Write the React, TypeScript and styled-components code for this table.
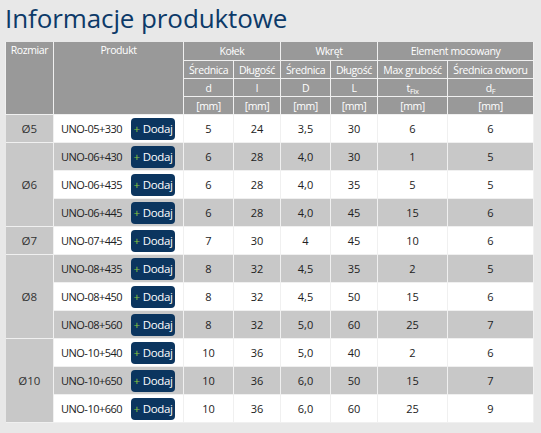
import React from "react";
import styled, {createGlobalStyle} from "styled-components";

interface Item {
  code: string;
  d: string;
  l: string;
  D: string;
  L: string;
  tfix: string;
  dF: string;
}

interface Group {
  size: string;
  items: Item[];
}

const groups: Group[] = [
  {size: "Ø5", items: [{code: "UNO-05+330", d: "5", l: "24", D: "3,5", L: "30", tfix: "6", dF: "6"}]},
  {
    size: "Ø6",
    items: [
      {code: "UNO-06+430", d: "6", l: "28", D: "4,0", L: "30", tfix: "1", dF: "5"},
      {code: "UNO-06+435", d: "6", l: "28", D: "4,0", L: "35", tfix: "5", dF: "5"},
      {code: "UNO-06+445", d: "6", l: "28", D: "4,0", L: "45", tfix: "15", dF: "6"},
    ],
  },
  {size: "Ø7", items: [{code: "UNO-07+445", d: "7", l: "30", D: "4", L: "45", tfix: "10", dF: "6"}]},
  {
    size: "Ø8",
    items: [
      {code: "UNO-08+435", d: "8", l: "32", D: "4,5", L: "35", tfix: "2", dF: "5"},
      {code: "UNO-08+450", d: "8", l: "32", D: "4,5", L: "50", tfix: "15", dF: "6"},
      {code: "UNO-08+560", d: "8", l: "32", D: "5,0", L: "60", tfix: "25", dF: "7"},
    ],
  },
  {
    size: "Ø10",
    items: [
      {code: "UNO-10+540", d: "10", l: "36", D: "5,0", L: "40", tfix: "2", dF: "6"},
      {code: "UNO-10+650", d: "10", l: "36", D: "6,0", L: "50", tfix: "15", dF: "7"},
      {code: "UNO-10+660", d: "10", l: "36", D: "6,0", L: "60", tfix: "25", dF: "9"},
    ],
  },
];

const colWidths = [48, 130, 50, 47, 50, 47, 70, 86];

export default function App() {
  let index = 0;

  return (
    <>
      <GlobalStyle/>
      <Page>
        <Title>Informacje produktowe</Title>
        <Table>
          <colgroup>
            {colWidths.map((w, i) => <col key={i} style={{width: w}}/>)}
          </colgroup>
          <thead>
            <tr>
              <Th rowSpan={4} valign="top">Rozmiar</Th>
              <Th rowSpan={4} valign="top">Produkt</Th>
              <Th colSpan={2} $tall>Kołek</Th>
              <Th colSpan={2} $tall>Wkręt</Th>
              <Th colSpan={2} $tall>Element mocowany</Th>
            </tr>
            <tr>
              <Th>Średnica</Th>
              <Th>Długość</Th>
              <Th>Średnica</Th>
              <Th>Długość</Th>
              <Th>Max grubość</Th>
              <Th>Średnica otworu</Th>
            </tr>
            <tr>
              <Th>d</Th>
              <Th>l</Th>
              <Th>D</Th>
              <Th>L</Th>
              <Th>t<Sub>Fix</Sub></Th>
              <Th>d<Sub>F</Sub></Th>
            </tr>
            <tr>
              {Array.from({length: 6}).map((_, i) => <Th key={i}>[mm]</Th>)}
            </tr>
          </thead>
          <tbody>
            {groups.map((group) =>
              group.items.map((item, i) => {
                const shaded = index++ % 2 === 1;
                return (
                  <tr key={item.code}>
                    {i === 0 && <SizeCell rowSpan={group.items.length}>{group.size}</SizeCell>}
                    <Td shaded={shaded}>
                      <Product>
                        <span>{item.code}</span>
                        <AddButton><Plus>+</Plus>Dodaj</AddButton>
                      </Product>
                    </Td>
                    <Td shaded={shaded}>{item.d}</Td>
                    <Td shaded={shaded}>{item.l}</Td>
                    <Td shaded={shaded}>{item.D}</Td>
                    <Td shaded={shaded}>{item.L}</Td>
                    <Td shaded={shaded}>{item.tfix}</Td>
                    <Td shaded={shaded}>{item.dF}</Td>
                  </tr>
                );
              })
            )}
          </tbody>
        </Table>
      </Page>
    </>
  );
}

const GlobalStyle = createGlobalStyle`
  html, body {
    margin: 0;
    padding: 0;
    background: #e8e8e8;
  }

  body {
    font-family: "Open Sans", "Noto Sans", sans-serif;
  }
`;

const Page = styled.div`
  width: 541px;
  height: 433px;
  padding: 0 5px;
  box-sizing: border-box;
  background: #e8e8e8;
  overflow: hidden;
`;

const Title = styled.h1`
  margin: 0;
  padding-top: 1px;
  height: 41px;
  font-size: 26px;
  font-weight: 400;
  line-height: 34px;
  color: #0d3a68;
  letter-spacing: -0.1px;
`;

const Table = styled.table`
  width: 528px;
  table-layout: fixed;
  border-collapse: collapse;
  font-size: 10.5px;
`;

const Th = styled.th<{$tall?: boolean}>`
  height: ${({$tall}) => $tall ? "18px" : "17px"};
  padding: 0;
  border: 1px solid #f0f0f0;
  border-top: none;
  background: #999999;
  color: #ffffff;
  font-weight: 400;
  line-height: 16px;
  letter-spacing: -0.4px;
  text-align: center;
  white-space: nowrap;
`;

const Sub = styled.sub`
  font-size: 7.5px;
  vertical-align: -2px;
  line-height: 0;
`;

const Td = styled.td<{shaded: boolean}>`
  height: 27px;
  padding: 0;
  border: 1px solid #f0f0f0;
  background: ${({shaded}) => shaded ? "#c8c8c8" : "#ffffff"};
  color: #222222;
  font-size: 11px;
  text-align: center;
  white-space: nowrap;
`;

const SizeCell = styled.td`
  padding: 0;
  border: 1px solid #f0f0f0;
  border-left: none;
  background: #c8c8c8;
  color: #333333;
  font-size: 11.5px;
  text-align: center;
`;

const Product = styled.div`
  display: flex;
  align-items: center;
  justify-content: space-between;
  padding: 0 8px 0 7px;
  font-size: 11px;
  letter-spacing: -0.5px;
`;

const AddButton = styled.span`
  display: inline-flex;
  align-items: center;
  justify-content: center;
  height: 22px;
  width: 44px;
  box-sizing: border-box;
  border-radius: 4px;
  background: #0b355f;
  color: #ffffff;
  font-size: 11.5px;
  letter-spacing: -0.4px;
`;

const Plus = styled.span`
  color: #8dc63f;
  margin-right: 3px;
`;
